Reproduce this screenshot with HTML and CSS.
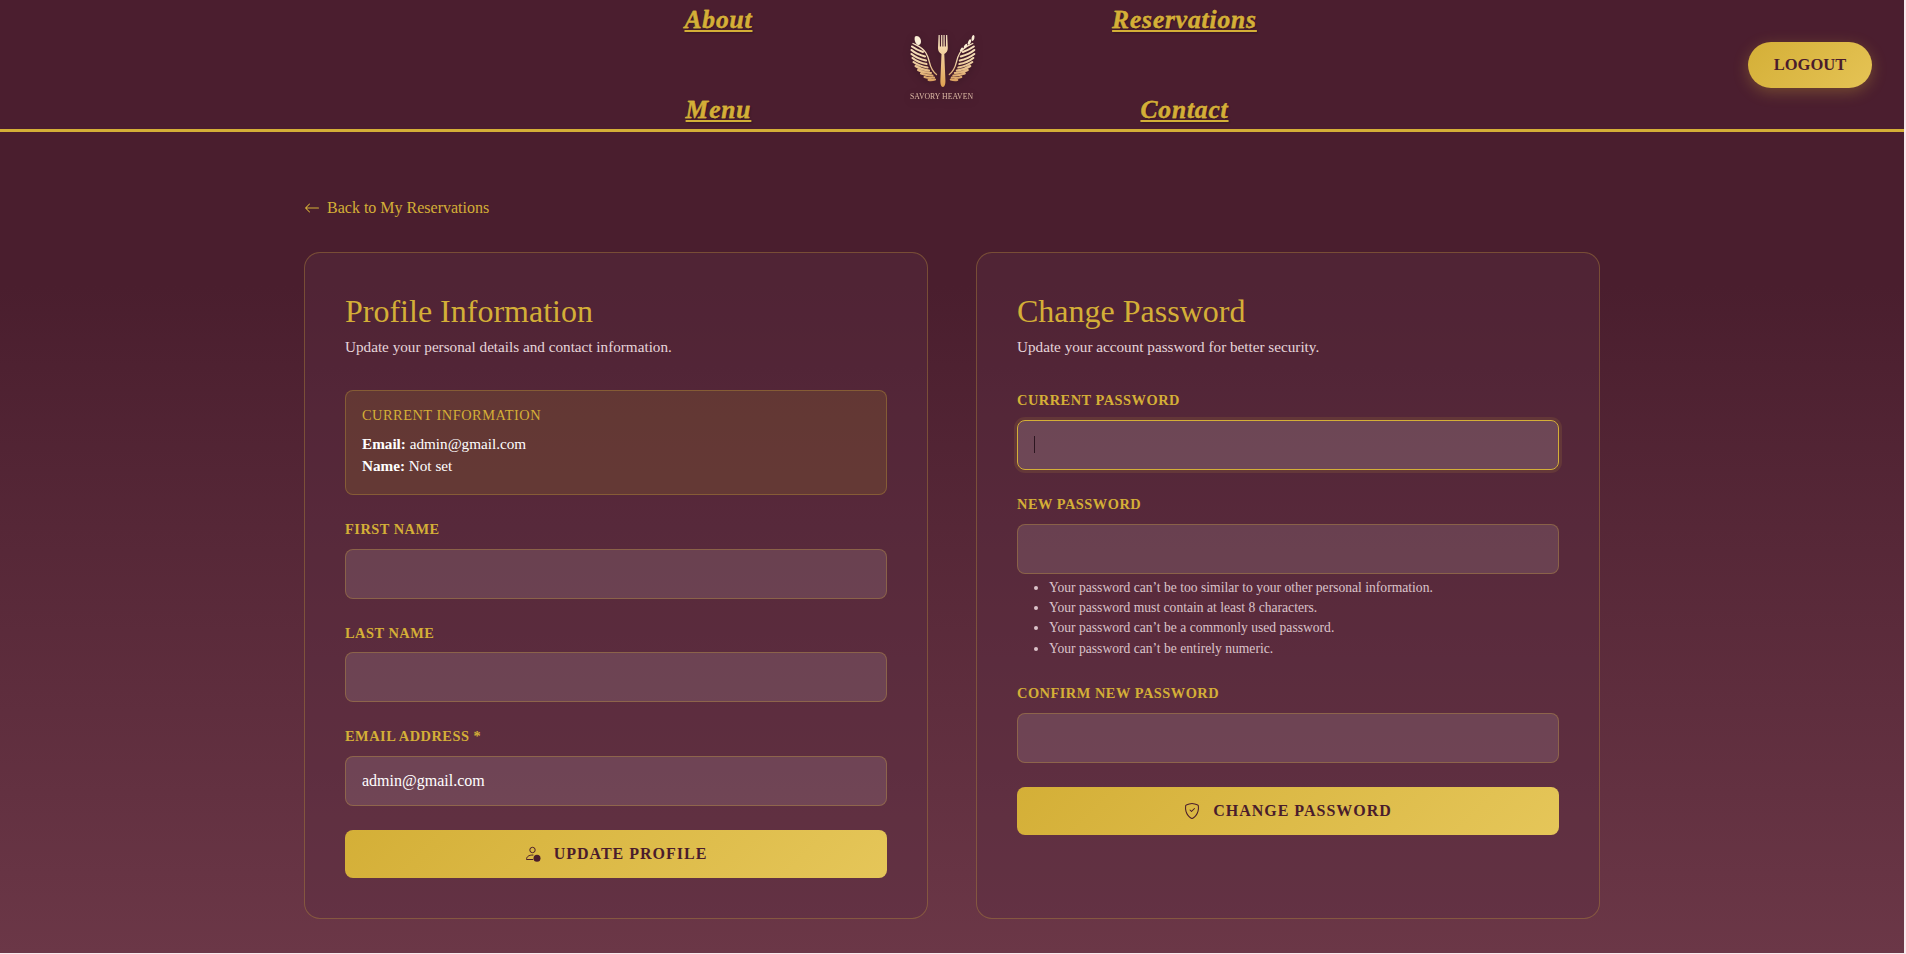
FILE: index.html
```html
<!DOCTYPE html>
<html lang="en">
<head>
<meta charset="utf-8">
<title>Savory Heaven - Profile</title>
<link rel="stylesheet" href="styles.css">
</head>
<body>
<div class="page">
  <header class="header">
    <nav class="nav">
      <div class="nav-col"><a class="nav-link" href="#">About</a><a class="nav-link" href="#">Menu</a></div>
      <a class="logo" href="#" aria-label="Savory Heaven">
        <svg width="72" height="72" viewBox="0 0 72 72">
          <defs>
            <linearGradient id="gold" x1="0" y1="0" x2="0" y2="1"><stop offset="0" stop-color="#fbe9c8"/><stop offset="1" stop-color="#dfa050"/></linearGradient>
            <linearGradient id="wing" gradientUnits="userSpaceOnUse" x1="0" y1="4" x2="0" y2="52"><stop offset="0" stop-color="#fbe8cb"/><stop offset="0.5" stop-color="#f2d8ae"/><stop offset="1" stop-color="#d89b58"/></linearGradient>
            <g id="feathers" fill="none" stroke="url(#wing)" stroke-linecap="round">
              <path stroke-width="1.3" d="M5 12.500C10 15 14 16 18 22C23 30 20 37 28.500 43.500"/>
              <path stroke-width="2.100" d="M4 15.500Q8 18.500 15 21M3.500 19Q8 23 17 25.500M3.500 23Q9 27.500 18 29.500M4.500 27Q10 31.500 18.500 33M5.500 31Q11 35 19.500 36.500M7.500 35Q13 38.500 21 39.500M10 39Q15 41.500 23 42M13 42.500Q18 44.500 24.500 44.500M16.500 46Q21 47.500 26 46.500M20.500 49Q24 49.500 27 48.500"/>
            </g>
          </defs>
          <use href="#feathers"/>
          <path d="M7 5.500C10 3.500 13 7 13 10.500C13 13.500 11 15 9 13.500C7 12 6 8 7 5.500Z" fill="#fbeed6"/>
          <use href="#feathers" transform="translate(69.800 0) scale(-1 1)"/>
          <g fill="#fbeed6">
            <ellipse cx="65" cy="7" rx="1.400" ry="3" transform="rotate(12 65 7)"/>
            <ellipse cx="61.500" cy="11" rx="1.400" ry="2.800" transform="rotate(25 61.500 11)"/>
            <ellipse cx="57.500" cy="15" rx="1.200" ry="2.500" transform="rotate(35 57.500 15)"/>
            <ellipse cx="53.500" cy="18.500" rx="1" ry="2.200" transform="rotate(35 53.500 18.500)"/>
          </g>
          <path fill="url(#gold)" d="M30.600 4h1.100l.200 11.500h1.100L33.200 4h1.100l.100 11.500h1L35.500 4h1.100l.200 11.500h1.100L38.100 4h1.100l.600 13c.100 3-1.500 5-3.500 6l1.100 26c.200 4-.700 7-2.500 7s-2.700-3-2.500-7l1.100-26c-2-1-3.600-3-3.500-6z"/>
          <text x="2" y="68" textLength="63" lengthAdjust="spacingAndGlyphs" class="logo-text">SAVORY HEAVEN</text>
        </svg>
      </a>
      <div class="nav-col"><a class="nav-link" href="#">Reservations</a><a class="nav-link" href="#">Contact</a></div>
    </nav>
    <button class="logout" type="button">LOGOUT</button>
  </header>

  <main class="main">
    <a class="back" href="#">
      <svg width="16" height="16" viewBox="0 0 16 16" fill="currentColor"><path fill-rule="evenodd" d="M15 8a.5.5 0 0 0-.5-.5H2.707l3.147-3.146a.5.5 0 1 0-.708-.708l-4 4a.5.5 0 0 0 0 .708l4 4a.5.5 0 0 0 .708-.708L2.707 8.500H14.500A.5.5 0 0 0 15 8"/></svg>
      <span>Back to My Reservations</span>
    </a>
    <div class="cards">
      <section class="card">
        <h2 class="title">Profile Information</h2>
        <p class="subtitle">Update your personal details and contact information.</p>
        <div class="info">
          <h3 class="info-title">CURRENT INFORMATION</h3>
          <p class="info-row"><strong>Email:</strong> admin@gmail.com</p>
          <p class="info-row"><strong>Name:</strong> Not set</p>
        </div>
        <div class="field"><label class="label" for="first">FIRST NAME</label><input class="input" id="first" type="text"></div>
        <div class="field"><label class="label" for="last">LAST NAME</label><input class="input" id="last" type="text"></div>
        <div class="field"><label class="label" for="email">EMAIL ADDRESS *</label><input class="input" id="email" type="text" value="admin@gmail.com"></div>
        <button class="button" type="button">
          <svg width="16" height="16" viewBox="0 0 16 16" fill="none" stroke="currentColor"><circle cx="7.500" cy="4" r="2.700"/><path stroke-linecap="round" d="M7.800 13.500H1.500C1.500 10.800 3.500 9 8 9"/><circle cx="12" cy="12.300" r="3.500" fill="currentColor" stroke="none"/></svg>
          <span>UPDATE PROFILE</span>
        </button>
      </section>

      <section class="card">
        <h2 class="title">Change Password</h2>
        <p class="subtitle">Update your account password for better security.</p>
        <div class="field"><label class="label" for="current">CURRENT PASSWORD</label><div class="input-wrap"><input class="input input-active" id="current" type="password"><span class="caret"></span></div></div>
        <div class="field"><label class="label" for="new">NEW PASSWORD</label><input class="input" id="new" type="password">
          <ul class="hints">
            <li>Your password can’t be too similar to your other personal information.</li>
            <li>Your password must contain at least 8 characters.</li>
            <li>Your password can’t be a commonly used password.</li>
            <li>Your password can’t be entirely numeric.</li>
          </ul>
        </div>
        <div class="field"><label class="label" for="confirm">CONFIRM NEW PASSWORD</label><input class="input" id="confirm" type="password"></div>
        <button class="button" type="button">
          <svg width="16" height="16" viewBox="0 0 16 16" fill="currentColor"><path d="M5.338 1.590a61 61 0 0 0-2.837.856.480.480 0 0 0-.328.390c-.554 4.157.726 7.190 2.253 9.188a10.700 10.700 0 0 0 2.287 2.233c.346.244.652.420.893.533q.180.085.293.118a1 1 0 0 0 .101.025 1 1 0 0 0 .100-.025q.114-.034.294-.118c.240-.113.547-.290.893-.533a10.700 10.700 0 0 0 2.287-2.233c1.527-1.997 2.807-5.031 2.253-9.188a.480.480 0 0 0-.328-.390c-.651-.213-1.750-.560-2.837-.855C9.552 1.290 8.531 1.067 8 1.067c-.530 0-1.552.223-2.662.524zM5.072.560C6.157.265 7.310 0 8 0s1.843.265 2.928.560c1.110.300 2.229.655 2.887.870a1.540 1.540 0 0 1 1.044 1.262c.596 4.477-.787 7.795-2.465 9.990a11.800 11.800 0 0 1-2.517 2.453 7 7 0 0 1-1.048.625c-.280.132-.581.240-.829.240s-.548-.108-.829-.240a7 7 0 0 1-1.048-.625 11.800 11.800 0 0 1-2.517-2.453C1.928 10.487.545 7.169 1.141 2.692A1.540 1.540 0 0 1 2.185 1.430 63 63 0 0 1 5.072.560"/><path d="M10.854 5.146a.5.5 0 0 1 0 .708l-3 3a.5.5 0 0 1-.708 0l-1.500-1.500a.5.5 0 1 1 .708-.708L7.500 7.793l2.646-2.647a.5.5 0 0 1 .708 0"/></svg>
          <span>CHANGE PASSWORD</span>
        </button>
      </section>
    </div>
  </main>
</div>
</body>
</html>
```
FILE: styles.css
```css
* { box-sizing: border-box; }
body {
  margin: 0;
  padding: 0 2px 1px 0;
  height: 954px;
  overflow: hidden;
  background: #f6e9ec;
  font-family: "Liberation Serif", serif;
  font-size: 16px;
  line-height: 1.5;
  color: #fff;
}
h2, h3, p, ul { margin: 0; font-weight: 400; }
.page { height: 953px; overflow: hidden; background: linear-gradient(180deg, #4a1e2e 0%, #4a1e2e 30%, #6b3747 100%); }

.header {
  display: grid;
  grid-template-columns: 1fr 699px 1fr;
  align-items: center;
  height: 132px;
  padding: 0 32px;
  background: #4b1e2f;
  border-bottom: 3px solid #d4af37;
}
.nav { grid-column: 2; display: grid; grid-template-columns: repeat(3, 233px); justify-items: center; align-items: center; height: 129px; }
.nav-col { display: flex; flex-direction: column; align-items: center; gap: 54px; padding-right: 1px; }
.nav-link {
  color: #d4af37;
  font-size: 25.500px;
  font-weight: 700;
  font-style: italic;
  line-height: 36px;
  letter-spacing: 0.850px;
  -webkit-text-stroke: 0.300px #d4af37;
  text-decoration: underline;
  text-decoration-thickness: 2px;
  text-decoration-skip-ink: none;
  text-underline-offset: 2px;
  text-shadow: 1px 1px 2px rgba(0, 0, 0, 0.3);
}
.logo { display: block; height: 72px; margin: 4px 16px 0 0; filter: drop-shadow(0 2px 4px rgba(0, 0, 0, 0.2)); }
.logo-text { font-size: 7.500px; fill: #dcb9a4; }
.logout {
  justify-self: end;
  width: 124px;
  height: 46px;
  border: 0;
  border-radius: 23px;
  background: linear-gradient(135deg, #d4af37, #e5c355);
  box-shadow: 0 4px 15px rgba(212, 175, 55, 0.3);
  color: #4a1c2c;
  font: 700 16.500px "Liberation Serif", serif;
}

.main { width: 1296px; margin: 0 auto; padding-top: 64px; }
.back { display: inline-flex; align-items: center; gap: 7px; height: 24px; color: #d4af37; text-decoration: none; vertical-align: top; }
.cards { display: grid; grid-template-columns: 1fr 1fr; gap: 48px; margin-top: 32px; }
.card { padding: 40px; border: 1px solid rgba(212, 175, 55, 0.3); border-radius: 16px; background: rgba(91, 44, 64, 0.4); }
.title { padding-top: 2px; font-size: 32px; line-height: 32.560px; color: #d4af37; }
.subtitle { margin: 8px 0 32px; font-size: 15.200px; color: #e6d5da; }
.info { margin-bottom: 24px; padding: 16px; border: 1px solid rgba(212, 175, 55, 0.3); border-radius: 8px; background: rgba(122, 82, 48, 0.4); }
.info-title { margin-bottom: 8px; font-size: 14.400px; line-height: 17.280px; letter-spacing: 0.500px; color: #d4af37; }
.info-row { font-size: 15.200px; }
.field { margin-bottom: 24px; }
.label { display: block; margin-bottom: 8px; font-size: 14.400px; font-weight: 700; letter-spacing: 0.500px; color: #d4af37; }
.input-wrap { position: relative; }
.input {
  display: block;
  width: 100%;
  height: 50px;
  padding: 12px 16px;
  border: 1px solid rgba(212, 175, 55, 0.3);
  border-radius: 8px;
  outline: 0;
  background: rgba(255, 255, 255, 0.11);
  color: #fff;
  font: 16px "Liberation Serif", serif;
}
.input-active { border-color: #d4af37; background: rgba(255, 255, 255, 0.15); box-shadow: 0 0 0 3px rgba(212, 175, 55, 0.12); }
.caret { position: absolute; left: 17px; top: 16px; width: 1px; height: 17px; background: #2c1620; }
.hints { margin-top: 4px; padding-left: 32px; font-size: 13.600px; color: #dbc3ca; }
.button {
  display: flex;
  align-items: center;
  justify-content: center;
  gap: 13px;
  width: 100%;
  height: 48px;
  border: 0;
  border-radius: 8px;
  background: linear-gradient(135deg, #d4af37, #e5c659);
  color: #4a1c2c;
  font: 700 16px "Liberation Serif", serif;
  letter-spacing: 1px;
}
```
